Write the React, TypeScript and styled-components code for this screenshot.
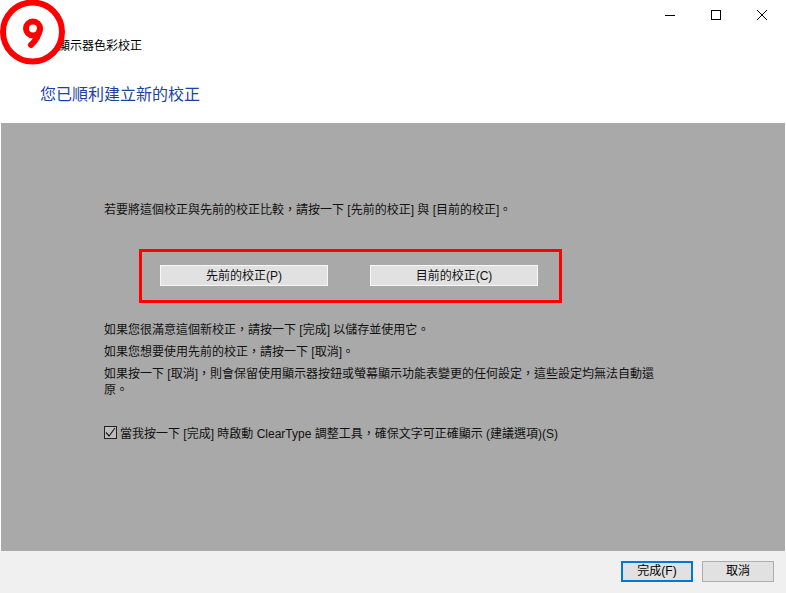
import { FC } from 'react';
import styled, { createGlobalStyle } from 'styled-components';

const FONT = `"Liberation Sans", "Noto Sans CJK TC", sans-serif`;

const App: FC = () => {
  return (
    <>
      <GlobalStyle />
      <Window>
        <StepBadge>
          <svg width="68" height="68" viewBox="0 0 68 68">
            <circle cx="32.5" cy="32" r="29.5" fill="#fff" stroke="#ff0000" strokeWidth="6" />
            <circle cx="33" cy="28.5" r="7" fill="none" stroke="#ff0000" strokeWidth="6" />
            <path d="M40 29 Q38.5 38 31 45" fill="none" stroke="#ff0000" strokeWidth="6" strokeLinecap="round" />
          </svg>
        </StepBadge>
        <TitleBar>
          <WindowButton>
            <svg width="12" height="12" viewBox="0 0 12 12"><path d="M1 6.5h10" stroke="#000" fill="none" /></svg>
          </WindowButton>
          <WindowButton>
            <svg width="12" height="12" viewBox="0 0 12 12"><rect x="1.5" y="1.5" width="9" height="9" stroke="#000" fill="none" /></svg>
          </WindowButton>
          <WindowButton>
            <svg width="12" height="12" viewBox="0 0 12 12"><path d="M1 1l10 10M11 1L1 11" stroke="#000" fill="none" /></svg>
          </WindowButton>
        </TitleBar>
        <AppName>顯示器色彩校正</AppName>
        <Heading>您已順利建立新的校正</Heading>
        <Panel>
          <Intro>若要將這個校正與先前的校正比較，請按一下 [先前的校正] 與 [目前的校正]。</Intro>
          <Highlight>
            <CompareButton>先前的校正(P)</CompareButton>
            <CompareButton>目前的校正(C)</CompareButton>
          </Highlight>
          <Paragraph>如果您很滿意這個新校正，請按一下 [完成] 以儲存並使用它。</Paragraph>
          <Paragraph>如果您想要使用先前的校正，請按一下 [取消]。</Paragraph>
          <Paragraph>如果按一下 [取消]，則會保留使用顯示器按鈕或螢幕顯示功能表變更的任何設定，這些設定均無法自動還原。</Paragraph>
          <CheckRow>
            <CheckBox>
              <svg width="11" height="11" viewBox="0 0 11 11"><path d="M1 5.5l3 3.5 6-8" stroke="#222" strokeWidth="1.2" fill="none" /></svg>
            </CheckBox>
            當我按一下 [完成] 時啟動 ClearType 調整工具，確保文字可正確顯示 (建議選項)(S)
          </CheckRow>
        </Panel>
        <Footer>
          <FooterButton $primary>完成(F)</FooterButton>
          <FooterButton>取消</FooterButton>
        </Footer>
      </Window>
    </>
  );
};

const GlobalStyle = createGlobalStyle`
  html, body {
    margin: 0;
    padding: 0;
    background: #fff;
  }
  * {
    box-sizing: border-box;
  }
`;

const Window = styled.div`
  position: relative;
  width: 786px;
  height: 593px;
  display: flex;
  flex-direction: column;
  overflow: hidden;
  background: #fff;
  font-family: ${FONT};
  font-size: 12px;
  color: #000;
`;

const StepBadge = styled.div`
  position: absolute;
  left: 0;
  top: 0;
  width: 68px;
  height: 68px;
`;

const TitleBar = styled.div`
  height: 30px;
  padding-right: 1px;
  display: flex;
  justify-content: flex-end;
`;

const WindowButton = styled.div`
  width: 46px;
  height: 30px;
  display: flex;
  align-items: center;
  justify-content: center;
`;

const AppName = styled.div`
  height: 16px;
  margin-top: 8px;
  padding-left: 58px;
  line-height: 16px;
  font-size: 12px;
`;

const Heading = styled.div`
  height: 24px;
  margin-top: 29px;
  padding-left: 40px;
  line-height: 24px;
  font-size: 16px;
  color: #1a44a0;
`;

const Panel = styled.div`
  height: 428px;
  margin: 16px 1px 0;
  padding: 77px 125px 0 103px;
  background: #a9a9a9;
  color: #111;
`;

const Intro = styled.div`
  line-height: 20px;
`;

const Highlight = styled.div`
  width: 423px;
  height: 54px;
  margin: 29px 0 19px 35px;
  padding: 13px 21px 0 18px;
  display: flex;
  justify-content: space-between;
  align-items: flex-start;
  border: 3px solid #ff0000;
`;

const CompareButton = styled.div`
  width: 168px;
  height: 21px;
  line-height: 20px;
  text-align: center;
  background: #e1e1e1;
  border: 1px solid #f8f8f8;
`;

const Paragraph = styled.div`
  line-height: 16px;
  margin-bottom: 6px;
`;

const CheckRow = styled.div`
  display: flex;
  align-items: center;
  margin-top: 26px;
  height: 16px;
`;

const CheckBox = styled.div`
  width: 13px;
  height: 13px;
  margin-right: 3px;
  display: flex;
  align-items: center;
  justify-content: center;
  background: #bdbdbd;
  border: 1px solid #222;
`;

const Footer = styled.div`
  flex: 1;
  display: flex;
  justify-content: flex-end;
  align-items: flex-start;
  gap: 9px;
  padding: 10px 12px 0 0;
  background: #f0f0f0;
`;

const FooterButton = styled.div<{ $primary?: boolean }>`
  width: 72px;
  height: 21px;
  text-align: center;
  background: #e1e1e1;
  border: ${(p) => (p.$primary ? '2px solid #0078d7' : '1px solid #adadad')};
  line-height: ${(p) => (p.$primary ? '17px' : '19px')};
`;

export default App;
